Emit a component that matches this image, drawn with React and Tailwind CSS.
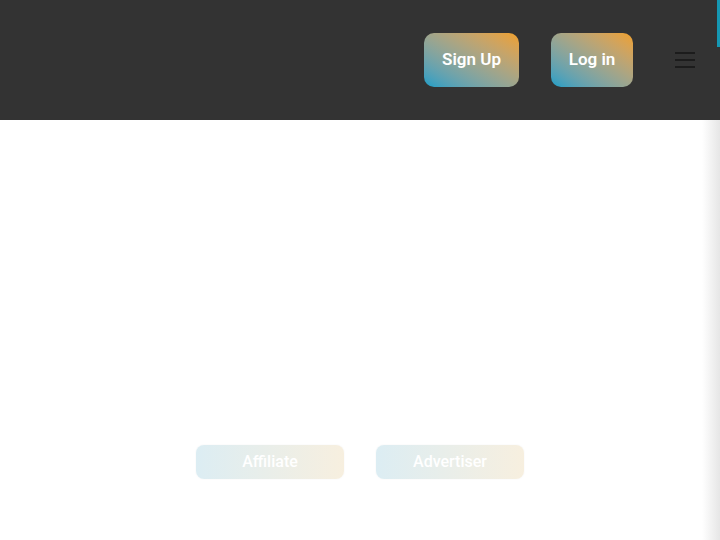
import React from "react";

export default function App() {
  return (
    <div className="relative w-[720px] h-[540px] overflow-hidden bg-white font-['Roboto',sans-serif]">
      {/* HEADER */}
      <header className="flex items-center h-[120px] bg-[#333333] pl-[424px]">
        <button className="w-[95px] h-[54px] rounded-[10px] bg-gradient-to-tr from-[#0a9ec8] to-[#f0a024] text-white text-[17px] font-semibold">
          Sign Up
        </button>
        <button className="ml-[32px] w-[82px] h-[54px] rounded-[10px] bg-gradient-to-tr from-[#0a9ec8] to-[#f0a024] text-white text-[17px] font-semibold">
          Log in
        </button>
        <div className="ml-[42px] flex flex-col gap-[5px] w-[20px]">
          <span className="block h-[2px] bg-[#1c1c1c]" />
          <span className="block h-[2px] bg-[#1c1c1c]" />
          <span className="block h-[2px] bg-[#1c1c1c]" />
        </div>
      </header>

      {/* corner accent */}
      <div className="absolute top-0 right-0 w-[3px] h-[47px] bg-[#1597b3]" />

      {/* side shadow */}
      <div className="absolute top-[120px] right-0 w-[18px] h-[420px] bg-gradient-to-r from-white/0 to-[#e6e6e6]" />

      {/* BODY */}
      <main className="flex justify-center gap-[32px] pt-[325px]">
        <button className="w-[148px] h-[34px] rounded-[8px] bg-gradient-to-r from-[#dcedf3] to-[#f7efdf] shadow-[0_0_2px_rgba(0,0,0,0.06)] text-white text-[16px] font-medium">
          Affiliate
        </button>
        <button className="w-[148px] h-[34px] rounded-[8px] bg-gradient-to-r from-[#dcedf3] to-[#f7efdf] shadow-[0_0_2px_rgba(0,0,0,0.06)] text-white text-[16px] font-medium">
          Advertiser
        </button>
      </main>
    </div>
  );
}
